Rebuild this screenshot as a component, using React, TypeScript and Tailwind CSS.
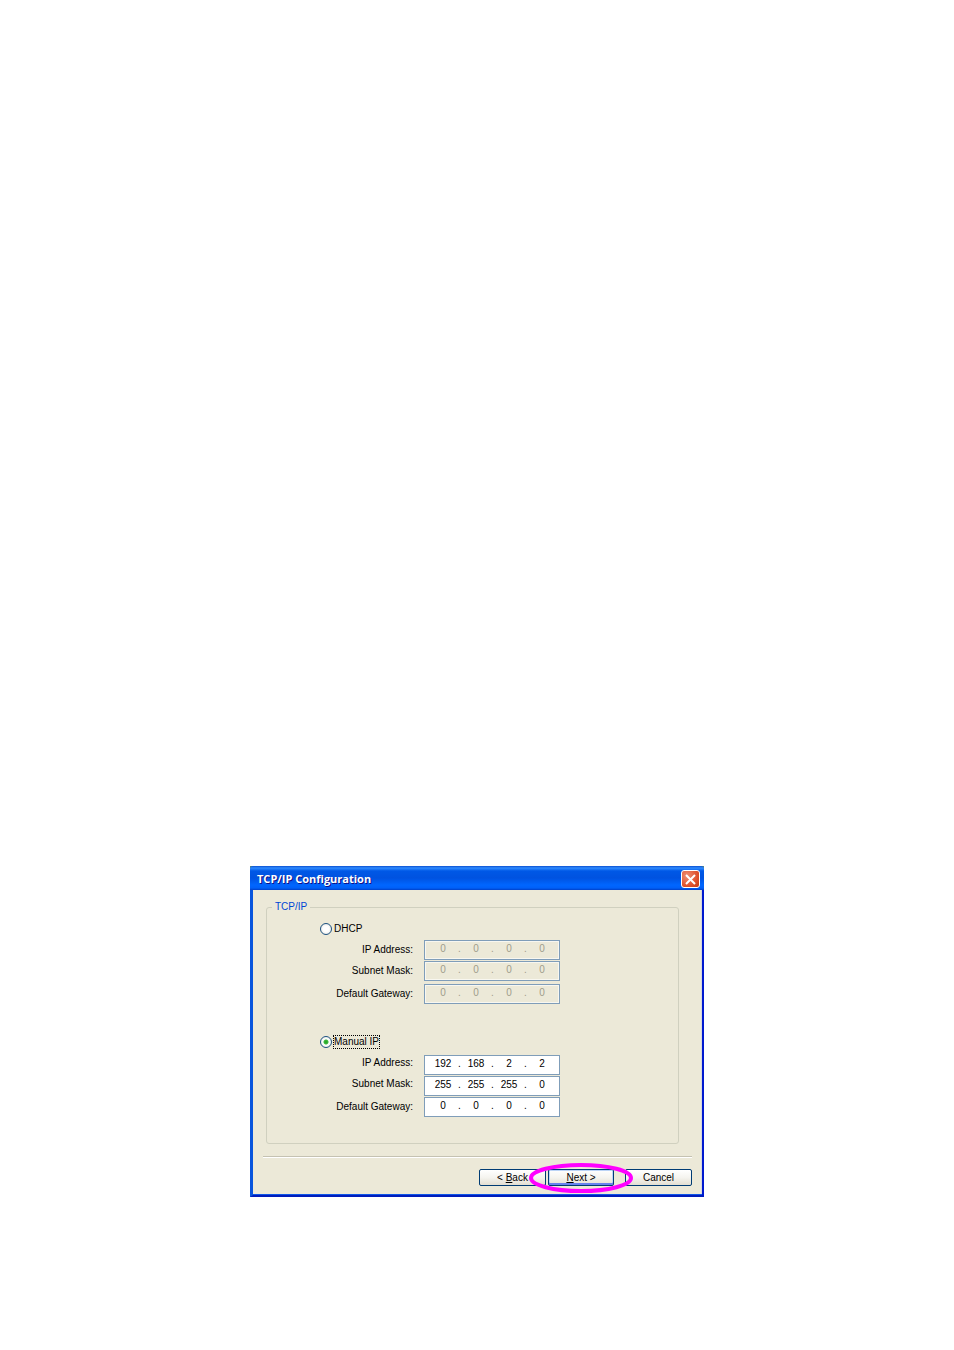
import { useState } from "react";
import clsx from "clsx";

type Mode = "dhcp" | "manual";

const fields = ["IP Address:", "Subnet Mask:", "Default Gateway:"];

const groups: { mode: Mode; title: string; values: string[][] }[] = [
  {
    mode: "dhcp",
    title: "DHCP",
    values: [
      ["0", "0", "0", "0"],
      ["0", "0", "0", "0"],
      ["0", "0", "0", "0"],
    ],
  },
  {
    mode: "manual",
    title: "Manual IP",
    values: [
      ["192", "168", "2", "2"],
      ["255", "255", "255", "0"],
      ["0", "0", "0", "0"],
    ],
  },
];

function IpField({
  id,
  label,
  value,
  disabled,
}: {
  id: string;
  label: string;
  value: string[];
  disabled: boolean;
}) {
  return (
    <div
      className={clsx(
        "flex h-5 w-[136px] items-center border border-[#7f9db9] pb-[3px] pl-1",
        disabled ? "bg-[#ece9d8] text-[#a09c8c] shadow-[inset_0_0_0_1px_#f8f7f0]" : "bg-white text-black"
      )}
    >
      {value.map((octet, i) => (
        <div key={i} className="flex items-center">
          {i > 0 && <span className="w-[5px] text-center leading-3">.</span>}
          <input
            id={i === 0 ? id : undefined}
            aria-label={i === 0 ? undefined : `${label} ${i + 1}`}
            defaultValue={octet}
            disabled={disabled}
            maxLength={3}
            className="h-3 w-7 bg-transparent p-0 text-center leading-3 outline-none"
          />
        </div>
      ))}
    </div>
  );
}

function AddressGroup({
  mode,
  title,
  values,
  active,
  onSelect,
}: {
  mode: Mode;
  title: string;
  values: string[][];
  active: boolean;
  onSelect: () => void;
}) {
  return (
    <div>
      <div className="flex h-[14px] items-center gap-px">
        <input
          type="radio"
          name="mode"
          id={mode}
          checked={active}
          onChange={onSelect}
          className="size-3 appearance-none rounded-full border border-[#1c5180] bg-[radial-gradient(circle,#ffffff_40%,#dcdcd7)] checked:bg-[radial-gradient(circle,#21a121_0,#3cb83c_2px,#ffffff_3px,#e4e4de)]"
        />
        <label
          htmlFor={mode}
          className={clsx(
            "border border-dotted leading-3",
            active ? "border-black" : "border-transparent"
          )}
        >
          {title}
        </label>
      </div>
      <div className="mt-1 flex gap-[11px]">
        <div className="flex w-[93px] flex-col text-right">
          {fields.map((field, i) => (
            <label
              key={field}
              htmlFor={`${mode}-${i}`}
              className="mb-px h-5 leading-5 whitespace-nowrap last:mt-[2px] last:mb-0"
            >
              {field}
            </label>
          ))}
        </div>
        <div
          className={clsx(
            "flex flex-col gap-px",
            mode === "manual" ? "pt-[2px]" : "[&>:last-child]:mt-[2px]"
          )}
        >
          {fields.map((field, i) => (
            <IpField
              key={field}
              id={`${mode}-${i}`}
              label={field}
              value={values[i]}
              disabled={!active}
            />
          ))}
        </div>
      </div>
    </div>
  );
}

const buttonStyle =
  "h-[17px] rounded-[2px] border border-[#003c74] bg-linear-to-b from-white via-[#f5f4ef] to-[#e3dfd2] text-center leading-[15px]";

export default function App() {
  const [mode, setMode] = useState<Mode>("manual");

  return (
    <main className="min-h-screen bg-white pt-[866px] pb-12 font-['Liberation_Sans',Arial,sans-serif] text-[10px] leading-4 text-black">
      <div
        role="dialog"
        aria-labelledby="dialog-title"
        className="mx-auto w-full max-w-[454px] bg-[#5c8a6e]"
      >
        {/* Title bar */}
        <header className="flex h-6 items-center justify-between rounded-t-[3px] bg-[linear-gradient(#0a4fd0_0,#2f8bff_2px,#0058e6_5px,#0052e0_12px,#0066ff_19px,#0060f8_22px,#0040c8)] pt-[2px] pr-1 pl-[7px]">
          <h1
            id="dialog-title"
            className="font-['Open_Sans','Noto_Sans',sans-serif] text-[11px] font-bold text-white [text-shadow:1px_1px_#0f1089]"
          >
            TCP/IP Configuration
          </h1>
          <button
            type="button"
            aria-label="Close"
            className="flex h-[18px] w-[19px] items-center justify-center rounded-[3px] border border-white bg-[radial-gradient(circle_at_30%_30%,#ee8f74,#e0542f_60%,#c43a12)]"
          >
            <svg viewBox="0 0 11 11" className="size-[11px]" fill="none" stroke="white" strokeWidth="2">
              <path d="M1 1l9 9M10 1l-9 9" />
            </svg>
          </button>
        </header>

        <form
          onSubmit={(e) => e.preventDefault()}
          className="border-t-0 border-r-2 border-b-2 border-l-[3px] border-r-[#0019cf] border-b-[#001dbb] border-l-[#0855dd] bg-[#ece9d8] pt-[9px] pb-[9px] shadow-[inset_0_-1px_#0f55e6,inset_-1px_0_#d5d8dc]"
        >
          <fieldset className="mr-[23px] ml-[13px] rounded-[3px] border border-[#d0d0bf] px-[5px] pb-[26px]">
            <legend className="px-[3px] leading-4 text-[#0046d5]">TCP/IP</legend>
            <div className="flex flex-col gap-[31px] pt-[7px] pl-12">
              {groups.map((group) => (
                <AddressGroup
                  key={group.mode}
                  {...group}
                  active={mode === group.mode}
                  onSelect={() => setMode(group.mode)}
                />
              ))}
            </div>
          </fieldset>

          <hr className="mx-[10px] mt-3 h-[2px] border-t border-b border-t-[#c5c2b2] border-b-white" />

          {/* Wizard buttons */}
          <div className="mt-[11px] mr-[10px] flex justify-end">
            <button type="button" className={clsx(buttonStyle, "w-[67px]")}>
              &lt; <u>B</u>ack
            </button>
            <div className="relative mr-[11px] ml-[2px] flex">
              <button
                type="submit"
                className={clsx(
                  buttonStyle,
                  "w-[66px] shadow-[inset_0_-2px_#6982ee,inset_0_0_0_1px_#bcd4f6]"
                )}
              >
                <u>N</u>ext &gt;
              </button>
              {/* Highlight ring around Next */}
              <svg
                viewBox="0 0 104 30"
                className="pointer-events-none absolute top-1/2 left-1/2 h-[30px] w-[104px] -translate-1/2"
                fill="none"
                stroke="#ff00ff"
                strokeWidth="4"
              >
                <ellipse cx="52" cy="15" rx="50" ry="13" />
              </svg>
            </div>
            <button type="button" className={clsx(buttonStyle, "w-[67px]")}>
              Cancel
            </button>
          </div>
        </form>
      </div>
    </main>
  );
}
